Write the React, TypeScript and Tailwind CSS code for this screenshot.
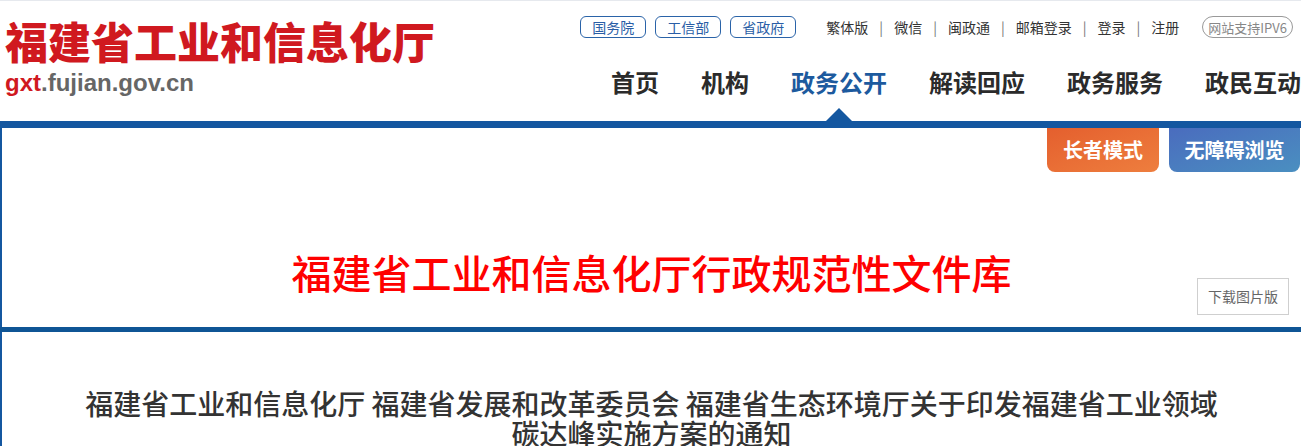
import React from 'react';

const govLinks = ['国务院', '工信部', '省政府'];
const topLinks = ['繁体版', '微信', '闽政通', '邮箱登录', '登录', '注册'];
const navItems = ['首页', '机构', '政务公开', '解读回应', '政务服务', '政民互动'];

const cjk = "font-['Noto_Sans_CJK_SC',sans-serif]";

const App: React.FC = () => {
  return (
    <div className={`w-[1301px] bg-white ${cjk} overflow-hidden`}>
      {/* header */}
      <header className="flex justify-between border-t border-[#e6e9ee]">
        <div className="pl-[5px] pt-[18px]">
          <div className="text-[43px] leading-none font-black text-[#d0191f] whitespace-nowrap">
            福建省工业和信息化厅
          </div>
          <div className="mt-[9px] text-[24px] leading-none font-bold font-['Liberation_Sans',Arial,sans-serif] text-[#666]">
            <span className="text-[#d0191f]">gxt</span>.fujian.gov.cn
          </div>
        </div>

        <div className="flex flex-col items-end pt-[15px]">
          <div className="flex items-center h-[22px] text-[14px] pr-[8px]">
            {govLinks.map((l) => (
              <span
                key={l}
                className="mr-[9px] h-[22px] px-[11px] flex items-center border border-[#2a63a8] rounded-[6px] text-[#2a5ea6] leading-none"
              >
                {l}
              </span>
            ))}
            <div className="flex items-center ml-[21px] text-[#333]">
              {topLinks.map((l, i) => (
                <React.Fragment key={l}>
                  {i > 0 && <span className="mx-[11px] text-[#777]">|</span>}
                  <span>{l}</span>
                </React.Fragment>
              ))}
            </div>
            <span className="ml-[23px] h-[22px] px-[5px] flex items-center border border-[#999] rounded-full text-[13px] text-[#888] leading-none">
              网站支持IPV6
            </span>
          </div>

          <nav className="flex gap-[42px] mt-[32px]">
            {navItems.map((n) => {
              const active = n === '政务公开';
              return (
                <div key={n} className="flex flex-col items-center">
                  <span
                    className={`text-[24px] leading-none font-bold whitespace-nowrap ${
                      active ? 'text-[#1d5a9e]' : 'text-[#2b2b2b]'
                    }`}
                  >
                    {n}
                  </span>
                  <svg
                    width="26"
                    height="13"
                    viewBox="0 0 26 13"
                    className={`mt-[14px] ${active ? '' : 'invisible'}`}
                  >
                    <polygon points="13,0 26,13 0,13" fill="#1457a0" />
                  </svg>
                </div>
              );
            })}
          </nav>
        </div>
      </header>

      {/* blue bar */}
      <div className="h-[7px] bg-[#1457a0]" />

      {/* content box */}
      <div className="border-l-2 border-[#1457a0]">
        <div className="flex justify-end gap-[10px] pr-[1px]">
          <button className="w-[112px] h-[44px] rounded-b-[8px] bg-gradient-to-br from-[#e45f2e] to-[#ee7e3e] text-white text-[20px] font-bold">
            长者模式
          </button>
          <button className="w-[131px] h-[44px] rounded-b-[8px] bg-gradient-to-br from-[#4a6cbe] to-[#4a8fc0] text-white text-[20px] font-bold">
            无障碍浏览
          </button>
        </div>

        <div className="grid grid-cols-[1fr_auto_1fr] h-[155px]">
          <div />
          <h1 className="pt-[80px] text-[40px] leading-none text-[#ff0000] font-medium whitespace-nowrap">
            福建省工业和信息化厅行政规范性文件库
          </h1>
          <div className="flex justify-end items-end pr-[12px] pb-[12px]">
            <span className="h-[37px] px-[10px] flex items-center border border-[#cfcfcf] text-[14px] text-[#666]">
              下载图片版
            </span>
          </div>
        </div>
      </div>

      <div className="h-[5px] bg-[#0f5595]" />

      <div className="border-l-2 border-[#1457a0] pt-[56px] pb-[20px]">
        <h2 className="text-center text-[28px] leading-[30px] font-medium text-[#333]">
          福建省工业和信息化厅 福建省发展和改革委员会 福建省生态环境厅关于印发福建省工业领域
          <br />
          碳达峰实施方案的通知
        </h2>
      </div>
    </div>
  );
};

export default App;
